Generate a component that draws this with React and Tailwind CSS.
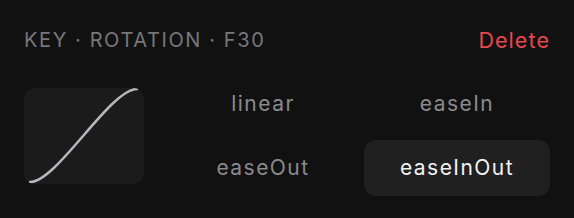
import React from "react";

export default function App() {
  const opts = ["linear", "easeIn", "easeOut", "easeInOut"];
  return (
    <div className="w-[574px] h-[218px] bg-[#111112] px-6 pt-[25px] font-['Inter',sans-serif]">
      <div className="flex items-center justify-between h-[30px]">
        <span className="text-[20px] tracking-[0.08em] text-[#77777a]">KEY · ROTATION · F30</span>
        <span className="text-[21.5px] tracking-[0.05em] text-[#e5484d]">Delete</span>
      </div>
      <div className="flex items-start gap-[26px] mt-[33px]">
        <div className="w-[120px] h-[96px] rounded-[10px] bg-[#1b1b1c] relative overflow-hidden">
          <svg width="120" height="96" viewBox="0 0 120 96" className="absolute inset-0">
            <path d="M6 94 C 33 94, 86 1, 113 1" fill="none" stroke="#b6b6bb" strokeWidth="2.5" strokeLinecap="round" />
          </svg>
        </div>
        <div className="grid grid-cols-2 gap-x-2 gap-y-2 -mt-3">
          {opts.map((o) => (
            <div
              key={o}
              className={
                o === "easeInOut"
                  ? "w-[186px] h-[56px] rounded-[12px] bg-[#202021] flex items-center justify-center text-[21px] tracking-[0.07em] text-[#f2f2f3]"
                  : "w-[186px] h-[56px] rounded-[12px] flex items-center justify-center text-[21px] tracking-[0.07em] text-[#8a8a8d]"
              }
            >
              {o}
            </div>
          ))}
        </div>
      </div>
    </div>
  );
}
